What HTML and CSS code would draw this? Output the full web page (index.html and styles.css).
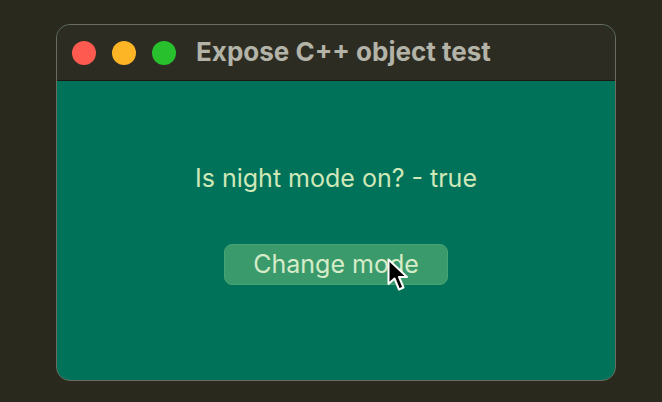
FILE: index.html
```
<!DOCTYPE html>
<html>
<head>
<meta charset="utf-8">
<link rel="stylesheet" href="styles.css">
</head>
<body>
<div class="window">
  <div class="titlebar">
    <span class="light red"></span>
    <span class="light yellow"></span>
    <span class="light green"></span>
    <span class="title">Expose C++ object test</span>
  </div>
  <div class="content">
    <p class="status">Is night mode on? - true</p>
    <div class="btn-wrap">
      <button class="btn">Change mode</button>
      <svg class="cursor" width="24" height="36" viewBox="0 0 24 36">
        <path d="M1.5 1.5 L1.5 26 L7.5 20.5 L12 31.5 L16.5 29.5 L12 19 L20 19 Z" fill="#000" stroke="#fff" stroke-width="2" stroke-linejoin="round"/>
      </svg>
    </div>
  </div>
</div>
</body>
</html>
```
FILE: styles.css
```
html, body {
  margin: 0;
  padding: 0;
}
body {
  width: 662px;
  height: 402px;
  background: #29291d;
  font-family: Inter, "Liberation Sans", Arial, sans-serif;
  padding: 24px 0 0 56px;
  box-sizing: border-box;
}
.window {
  width: 560px;
  height: 357px;
  border: 1px solid #6b6b60;
  border-radius: 14px;
  overflow: hidden;
  box-sizing: border-box;
  display: flex;
  flex-direction: column;
  background: #00725a;
}
.titlebar {
  height: 56px;
  flex: none;
  background: #2c2c22;
  border-bottom: 1px solid #1a1a12;
  display: flex;
  align-items: center;
  padding-left: 15px;
  box-sizing: border-box;
}
.light {
  width: 24px;
  height: 24px;
  border-radius: 50%;
  margin-right: 16px;
}
.red { background: #fe5a4f; }
.yellow { background: #fdb526; }
.green { background: #28c12d; }
.title {
  color: #b3b3a8;
  font-weight: bold;
  font-size: 26px;
  line-height: 30px;
  margin-left: 4px;
  margin-top: -2px;
}
.content {
  flex: 1;
  display: flex;
  flex-direction: column;
  align-items: center;
}
.status {
  margin: 82px 0 0 0;
  color: #cfe8b8;
  font-size: 25px;
  line-height: 30px;
}
.btn-wrap {
  position: relative;
  margin-top: 51px;
}
.btn {
  width: 224px;
  height: 41px;
  border: 1px solid #47a374;
  border-radius: 8px;
  background: #3b9a6b;
  color: #d6ecc8;
  font-family: Inter, "Liberation Sans", Arial, sans-serif;
  font-size: 25px;
  padding: 0 0 2px 0;
  display: block;
}
.cursor {
  position: absolute;
  left: 163px;
  top: 14px;
}
```
